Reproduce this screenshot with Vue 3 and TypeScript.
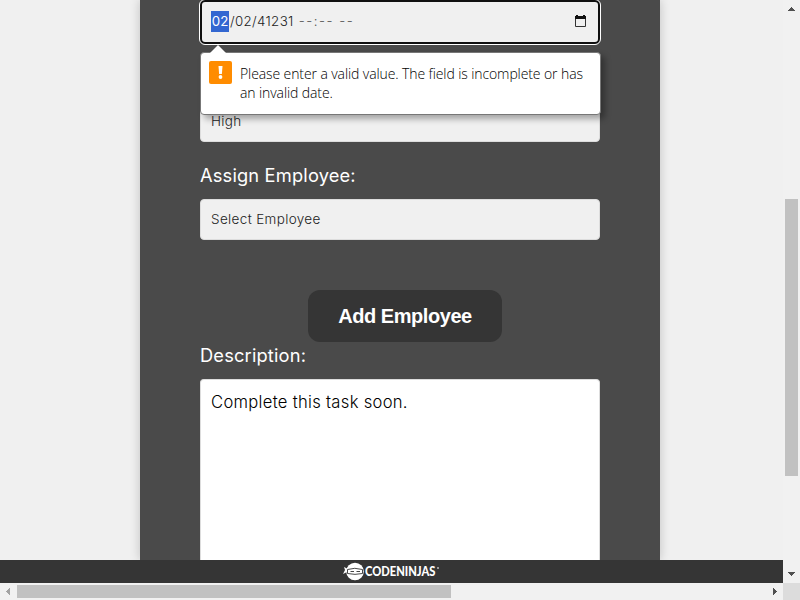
<script setup lang="ts">
import { ref } from 'vue'

const dateParts = { month: '02', rest: '/02/41231', time: '--:-- --' }
const priority = ref('High')
const employee = ref('Select Employee')
const description = ref('Complete this task soon.')
</script>

<template>
  <div class="window">
    <main class="viewport">
      <section class="card">
        <div class="field date" tabindex="0">
          <span class="month">{{ dateParts.month }}</span>
          <span class="rest">{{ dateParts.rest }}</span>
          <span class="time">{{ dateParts.time }}</span>
          <svg class="calendar" width="11" height="12" viewBox="0 0 11 12">
            <path d="M.5 2.5h10v9H.5z" fill="none" stroke="#333" />
            <path d="M0 1h11v3H0zM1 0h2v2H1zM8 0h2v2H8z" fill="#111" />
          </svg>
        </div>
        <div class="field select priority"><span>{{ priority }}</span></div>
        <label class="label assign"><span>Assign Employee:</span></label>
        <div class="field select"><span>{{ employee }}</span></div>
        <button class="add" type="button">Add Employee</button>
        <label class="label description"><span>Description:</span></label>
        <div class="textarea"><span>{{ description }}</span></div>

        <div class="popup" role="alert">
          <svg class="arrow" width="18" height="9" viewBox="0 0 18 9"><path d="M0 9 9 0l9 9z" fill="#fff" /></svg>
          <svg class="warning" width="23" height="23" viewBox="0 0 23 23">
            <rect width="23" height="23" rx="2" fill="#ff8c00" />
            <path d="M9.5 5h4l-.6 8h-2.8z" fill="#fff" />
            <circle cx="11.5" cy="16" r="1.9" fill="#fff" />
          </svg>
          <p><span class="line one">Please enter a valid value. The field is incomplete or has</span><span class="line two">an invalid date.</span></p>
        </div>
      </section>
    </main>

    <div class="vbar">
      <svg width="17" height="17" viewBox="0 0 17 17" shape-rendering="crispEdges"><path d="M5 11V10h1V9h1V8h1V7h1v1h1v1h1v1h1v1z" fill="#505050" /></svg>
      <div class="vtrack"><div class="vthumb" /></div>
      <svg width="17" height="17" viewBox="0 0 17 17" shape-rendering="crispEdges"><path d="M5 6v1h1v1h1v1h1v1h1V9h1V8h1V7h1V6z" fill="#505050" /></svg>
    </div>

    <footer class="footer">
      <svg class="logo" width="98" height="23" viewBox="0 0 98 23">
        <g fill="#fff">
          <circle cx="12" cy="11.5" r="8.8" />
          <path d="m1 7 4 2-1 3-4 2 2-4z" />
        </g>
        <path d="M4.5 9.5q7-2.4 15 0v4q-7.5 1.7-15 0z" fill="#fff" stroke="#333" stroke-width=".9" />
        <path d="M7.5 11.5h3.5M13.5 11.5h3.5" stroke="#444" stroke-width="1.1" />
        <text class="wordmark" transform="translate(22 16.3) scale(.86 1)">CODENINJAS</text>
        <circle cx="95" cy="8" r="1" fill="#bbb" />
      </svg>
    </footer>
    <div class="hbar">
      <svg width="17" height="17" viewBox="0 0 17 17" shape-rendering="crispEdges"><path d="M10 5v7H9v-1H8v-1H7V9H6V8h1V7h1V6h1V5z" fill="#a3a3a3" /></svg>
      <div class="htrack"><div class="hthumb" /></div>
      <svg width="17" height="17" viewBox="0 0 17 17" shape-rendering="crispEdges"><path d="M7 5v7h1v-1h1v-1h1V9h1V8h-1V7H9V6H8V5z" fill="#505050" /></svg>
    </div>
    <div class="corner" />
  </div>
</template>

<style>
body { overflow: hidden; }
</style>

<style scoped>
* { box-sizing: border-box; }
.window {
  width: 800px; height: 600px; overflow: hidden;
  display: grid; grid-template-columns: 783px 17px; grid-template-rows: 560px 23px 17px;
  background: #f0f0f0; font-family: Inter, sans-serif; font-weight: 300;
}
.viewport { overflow: hidden; padding-left: 140px; }
.card {
  position: relative; width: 520px; height: 560px; padding: 0 60px;
  display: flex; flex-direction: column; background: #4a4a4a;
  box-shadow: 0 0 10px rgba(0, 0, 0, .2);
}
span { white-space: pre; }
.field {
  width: 400px; height: 41px; flex: none; display: flex; align-items: center;
  padding: 0 10px; border: 1px solid #ddd; border-radius: 4px;
  background: #f0f0f0; color: #222; font-size: 13.5px;
}
.select { padding-bottom: 2px; letter-spacing: .35px; }
.date {
  height: 44px; padding: 0 11px 2px 9px; font-size: 13.3px;
  border: 2px solid #101010; border-radius: 5px; outline: 1px solid #fff;
}
.month { width: 18px; height: 21px; line-height: 21px; text-align: center; background: #3367d1; color: #fff; font-weight: 400; }
.rest { padding-left: 1px; letter-spacing: .35px; }
.time { margin-left: 5px; color: #555; letter-spacing: 1.5px; }
.calendar { margin-left: auto; margin-right: 1px; }
.priority { margin-top: 57px; }
.label { display: flex; color: #fff; font-size: 18.3px; line-height: 27px; font-weight: 400; letter-spacing: .16px; }
.assign { margin-top: 20px; margin-bottom: 10px; }
.add {
  width: 194px; height: 52px; flex: none; margin: 50px 0 0 108px; padding: 0;
  border: 0; border-radius: 12px; background: #353535; color: #fff;
  font: bold 20px/50px "Liberation Sans", sans-serif; letter-spacing: -.45px;
}
.description { margin-bottom: 10px; }
.textarea {
  flex: 1; padding: 10px; border: 1px solid #ddd; border-bottom: 0; border-radius: 4px 4px 0 0;
  background: #fff; color: #000; font-size: 16.6px; line-height: 24px; letter-spacing: .3px;
}
.popup {
  position: absolute; left: 60px; top: 52px; width: 401px; height: 63px;
  display: flex; padding: 8px; border: 1px solid #777; border-radius: 4px;
  background: #fff; box-shadow: 4px 4px 6px rgba(0, 0, 0, .32);
}
.arrow { position: absolute; left: 8px; top: -8px; }
.warning { flex: none; }
.popup p { margin: 3px 0 0 8px; color: #000; font: 300 14px/19px "Open Sans", "Noto Sans", sans-serif; letter-spacing: -.1px; }
.line { display: block; }
.footer { grid-column: 1; grid-row: 2; display: flex; justify-content: center; background: #353535; }
.logo { margin-left: 1px; }
.wordmark { fill: #fff; font: 900 13px Lato, sans-serif; }
.vbar { grid-column: 2; grid-row: 1 / 3; display: flex; flex-direction: column; background: #f1f1f1; }
.vtrack { flex: 1; padding: 182px 2px 0; }
.vthumb { height: 277px; background: #c1c1c1; }
.hbar { grid-column: 1; display: flex; background: #f1f1f1; }
.htrack { flex: 1; padding: 2px 0; }
.hthumb { width: 434px; height: 13px; background: #c1c1c1; }
.corner { background: #dcdcdc; }
</style>
